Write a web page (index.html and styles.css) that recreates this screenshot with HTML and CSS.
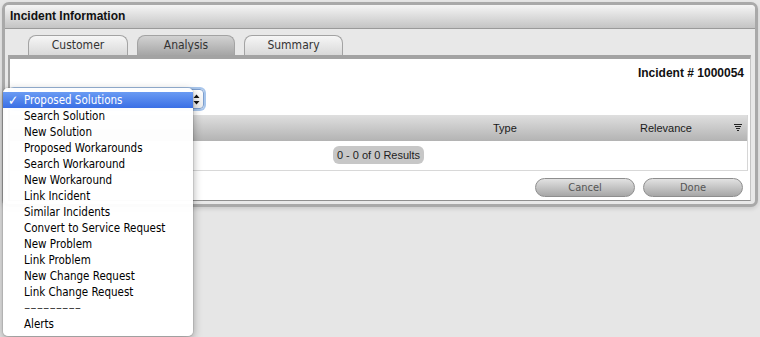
FILE: index.html
```html
<!DOCTYPE html>
<html>
<head>
<meta charset="utf-8">
<link rel="stylesheet" href="styles.css">
</head>
<body>
<div class="panel">
  <div class="panel-header">Incident Information</div>
  <div class="tabs">
    <div class="tab tab-customer">Customer</div>
    <div class="tab tab-analysis active">Analysis</div>
    <div class="tab tab-summary">Summary</div>
  </div>
  <div class="content">
    <div class="incident-no">Incident # 1000054</div>
    <div class="select-row">
      <div class="select">
        <span class="select-arrows">
          <svg width="7" height="11" viewBox="0 0 7 11"><path d="M3.5 0.5 L6.5 4 L0.5 4 Z M3.5 10.5 L6.5 7 L0.5 7 Z" fill="#111"/></svg>
        </span>
      </div>
    </div>
    <div class="table">
      <div class="thead">
        <span class="th"></span>
        <span class="th"></span>
        <span class="th">Type</span>
        <span class="th">Relevance</span>
        <span class="th th-icon">
          <svg width="8" height="8" viewBox="0 0 8 8"><path d="M0 0.5H8M1 2.5H7M2 4.5H6M3 6.5H5" stroke="#222" stroke-width="1"/></svg>
        </span>
      </div>
      <div class="tbody">
        <span class="results">0 - 0 of 0 Results</span>
      </div>
    </div>
    <div class="actions">
      <button class="btn">Cancel</button>
      <button class="btn">Done</button>
    </div>
  </div>
</div>
<ul class="menu">
  <li class="menu-item selected"><span class="check">✓</span>Proposed Solutions</li>
  <li class="menu-item">Search Solution</li>
  <li class="menu-item">New Solution</li>
  <li class="menu-item">Proposed Workarounds</li>
  <li class="menu-item">Search Workaround</li>
  <li class="menu-item">New Workaround</li>
  <li class="menu-item">Link Incident</li>
  <li class="menu-item">Similar Incidents</li>
  <li class="menu-item">Convert to Service Request</li>
  <li class="menu-item">New Problem</li>
  <li class="menu-item">Link Problem</li>
  <li class="menu-item">New Change Request</li>
  <li class="menu-item">Link Change Request</li>
  <li class="menu-item separator"><span class="dashes">---------</span></li>
  <li class="menu-item">Alerts</li>
</ul>
</body>
</html>
```
FILE: styles.css
```css
* { box-sizing: border-box; }
html, body { margin: 0; }
body {
  padding: 2px;
  background: #e6e6e6;
  font-family: "Liberation Sans", Arial, sans-serif;
  width: 760px;
  height: 337px;
  overflow: hidden;
}
.panel {
  width: 756px;
  border: 3px solid #a9a9a9;
  border-radius: 7px;
  background: #e8e8e8;
  padding-bottom: 3px;
  box-shadow: 0 2px 4px rgba(0,0,0,0.12);
}
.panel-header {
  height: 24px;
  border-bottom: 1px solid #9a9a9a;
  background: linear-gradient(#f5f5f5, #dadada 55%, #c4c4c4);
  border-radius: 4px 4px 0 0;
  padding-left: 5px;
  font-weight: bold;
  font-size: 12px;
  line-height: 23px;
  color: #111;
}
.tabs {
  display: flex;
  gap: 9px;
  padding: 6px 0 0 23px;
}
.tab {
  width: 99px;
  height: 20px;
  border: 1px solid #a3a3a3;
  border-bottom: none;
  border-radius: 8px 8px 0 0;
  background: linear-gradient(#f6f6f6, #d9d9d9);
  text-align: center;
  font-family: "DejaVu Sans Condensed", "DejaVu Sans", sans-serif;
  font-stretch: condensed;
  font-size: 12px;
  line-height: 19px;
  color: #333;
}
.tab-customer { width: 100px; }
.tab-analysis { width: 98px; }
.tab.active {
  background: linear-gradient(#d2d2d2, #a6a6a6);
  color: #333;
}
.content {
  margin: 0 4px 0 3px;
  background: #fff;
  border-top: 4px solid #a3a3a3;
  border-left: 2px solid #a3a3a3;
  border-right: 1px solid #c4c4c4;
  border-bottom: 1px solid #8f8f8f;
  padding: 7px 0 3px 0;
}
.incident-no {
  text-align: right;
  padding-right: 6px;
  font-weight: bold;
  font-size: 12px;
  line-height: 14px;
  color: #111;
}
.select-row {
  margin-top: 9px;
  height: 20px;
}
.select {
  width: 194px;
  height: 20px;
  border: 1px solid #7d9fcf;
  border-radius: 4px;
  box-shadow: 0 0 0 2px #a8c6ec;
  background: linear-gradient(#ffffff, #ececec);
  display: flex;
  align-items: center;
  justify-content: flex-end;
  padding: 0 3px 0 10px;
}
.select-arrows { display: flex; align-items: center; }
.table {
  margin: 6px 2px 0 0;
  border-right: 1px solid #d6d6d6;
}
.thead {
  height: 26px;
  display: grid;
  grid-template-columns: 100px 383px 147px 94px 1fr;
  align-items: center;
  background: linear-gradient(#dfdfdf, #c9c9c9 50%, #b3b3b3);
  font-size: 11px;
  color: #1a1a1a;
}
.th-icon { display: flex; align-items: center; }
.tbody {
  height: 30px;
  border-bottom: 1px solid #d8d8d8;
  display: flex;
  justify-content: center;
  align-items: center;
  padding-bottom: 1px;
}
.results {
  background: #c7c7c7;
  border-radius: 6px;
  height: 18px;
  line-height: 18px;
  padding: 0 4px;
  font-size: 11px;
  color: #1e1e1e;
}
.actions {
  display: flex;
  justify-content: flex-end;
  gap: 8px;
  margin-top: 7px;
  padding-right: 7px;
}
.btn {
  width: 100px;
  height: 19px;
  border: 1px solid #8e8e8e;
  border-radius: 10px;
  background: linear-gradient(#e2e2e2, #c4c4c4 50%, #a6a6a6);
  color: #555;
  font-family: "DejaVu Sans Condensed", "DejaVu Sans", sans-serif;
  font-stretch: condensed;
  font-size: 11px;
  line-height: 17px;
  padding: 0;
}
.menu {
  position: absolute;
  left: 3px;
  top: 88px;
  width: 190px;
  margin: 0;
  padding: 4px 0;
  list-style: none;
  background: rgba(255,255,255,0.97);
  border-radius: 5px;
  box-shadow: 0 3px 10px rgba(0,0,0,0.35), 0 0 0 1px rgba(0,0,0,0.08);
  font-family: "DejaVu Sans Condensed", "DejaVu Sans", sans-serif;
  font-stretch: condensed;
  font-size: 11.5px;
  color: #000;
}
.menu-item {
  position: relative;
  height: 16px;
  line-height: 16px;
  padding-left: 21px;
  white-space: nowrap;
}
.menu-item.selected {
  background: linear-gradient(#6a9bf3, #3a6fe5);
  color: #fff;
}
.check {
  position: absolute;
  left: 5px;
  top: 0;
  font-family: "DejaVu Sans", sans-serif;
  font-weight: bold;
  font-size: 13.5px;
  line-height: 16px;
}
.separator { color: #444; }
.dashes {
  display: inline-block;
  transform: scaleX(1.7);
  transform-origin: left center;
}
```
